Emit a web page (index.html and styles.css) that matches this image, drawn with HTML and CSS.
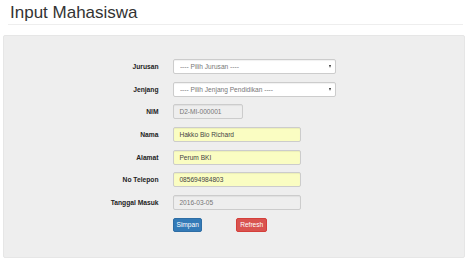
FILE: index.html
```html
<!DOCTYPE html>
<html lang="id">
<head>
<meta charset="utf-8">
<title>Input Mahasiswa</title>
<link rel="stylesheet" href="styles.css">
</head>
<body>
<header class="page-header">
  <h1 class="title">Input Mahasiswa</h1>
</header>
<section class="panel">
  <form class="form">
    <label class="label" for="jurusan">Jurusan</label>
    <div class="select-wrap wide">
      <select id="jurusan" class="control select"><option>---- Pilih Jurusan ----</option></select>
      <span class="caret"></span>
    </div>

    <label class="label" for="jenjang">Jenjang</label>
    <div class="select-wrap wide">
      <select id="jenjang" class="control select"><option>---- Pilih Jenjang Pendidikan ----</option></select>
      <span class="caret"></span>
    </div>

    <label class="label" for="nim">NIM</label>
    <input id="nim" class="control readonly short" value="D2-MI-000001" readonly>

    <label class="label" for="nama">Nama</label>
    <input id="nama" class="control filled medium" value="Hakko Bio Richard">

    <label class="label" for="alamat">Alamat</label>
    <input id="alamat" class="control filled medium" value="Perum BKI">

    <label class="label" for="telp">No Telepon</label>
    <input id="telp" class="control filled medium" value="085694984803">

    <label class="label" for="tgl">Tanggal Masuk</label>
    <input id="tgl" class="control readonly medium" value="2016-03-05" readonly>

    <span class="label"></span>
    <div class="actions">
      <button type="button" class="btn btn-primary">Simpan</button>
      <button type="button" class="btn btn-danger">Refresh</button>
    </div>
  </form>
</section>
</body>
</html>
```
FILE: styles.css
```css
html, body {
  margin: 0;
  padding: 0;
  background: #fff;
}
body {
  width: 474px;
  height: 264px;
  overflow: hidden;
  font-family: "Liberation Sans", Arial, sans-serif;
  color: #333;
}
.page-header {
  margin: 0 11px 0 8px;
  padding: 3px 0 0 2px;
  height: 21px;
  border-bottom: 1px solid #eeeeee;
}
.title {
  margin: 0;
  font-size: 17px;
  line-height: 20px;
  font-weight: normal;
  color: #333;
}
.panel {
  margin: 10px 0 0 3px;
  width: 462px;
  height: 223px;
  background: #eeeeee;
  border: 1px solid #e6e6e6;
  border-radius: 2px;
  box-sizing: border-box;
}
.form {
  display: grid;
  grid-template-columns: 154.5px 1fr;
  column-gap: 14.4px;
  row-gap: 7.7px;
  padding-top: 23px;
  grid-auto-rows: 15px;
  align-items: start;
}
.label {
  font-size: 6.7px;
  font-weight: bold;
  color: #222;
  text-align: right;
  line-height: 15px;
}
.control {
  display: block;
  box-sizing: border-box;
  height: 15px;
  margin: 0;
  padding: 0 5.5px;
  border: 1px solid #cccccc;
  border-radius: 2px;
  font-family: "Liberation Sans", Arial, sans-serif;
  font-size: 6.6px;
  line-height: 13px;
  color: #555;
  background: #fff;
  outline: none;
  box-shadow: inset 0 1px 1px rgba(0,0,0,0.06);
}
.select-wrap {
  position: relative;
  height: 15px;
  font-size: 0;
  line-height: 0;
}
.wide { width: 163.5px; }
.select {
  -webkit-appearance: none;
  appearance: none;
  width: 100%;
  padding: 0 0 0 6px;
  color: #777;
}
.caret {
  position: absolute;
  right: 5px;
  top: 6px;
  width: 0;
  height: 0;
  border-left: 1.5px solid transparent;
  border-right: 1.5px solid transparent;
  border-top: 3px solid #333;
}
.short { width: 70px; }
.medium { width: 128px; }
.readonly {
  background: #eeeeee;
  color: #777;
}
.filled {
  background: #fafdc2;
  color: #444;
}
.actions {
  display: flex;
  align-items: flex-start;
  gap: 34px;
}
.btn {
  box-sizing: border-box;
  height: 14px;
  padding: 0;
  margin: 0;
  border-radius: 2px;
  font-family: "Liberation Sans", Arial, sans-serif;
  font-size: 6.6px;
  color: #fff;
  line-height: 12px;
  text-align: center;
  cursor: pointer;
}
.btn-primary {
  width: 29.6px;
  background: #337ab7;
  border: 1px solid #2e6da4;
}
.btn-danger {
  width: 30.4px;
  background: #d9534f;
  border: 1px solid #d43f3a;
}
```
